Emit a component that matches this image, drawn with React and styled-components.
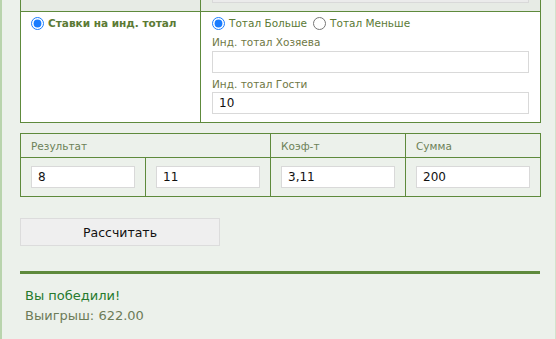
import React from "react";
import styled, { createGlobalStyle } from "styled-components";

const GlobalStyle = createGlobalStyle`
  html, body { margin: 0; padding: 0; }
  body {
    background: #ecf1eb;
    font-family: "DejaVu Sans", Verdana, sans-serif;
    overflow: hidden;
  }
`;

const Page = styled.div`
  border-left: 2px solid #b9d4ad;
  border-right: 1px solid #d3e2cc;
  padding: 0 15px 30px 18px;
  min-height: 400px;
  box-sizing: border-box;
`;

const Scrolled = styled.div`
  margin-top: -25px;
`;

const Table = styled.table`
  width: 520px;
  border-collapse: collapse;
  table-layout: fixed;
  border: 1px solid #5e8a3c;
`;

const Row = styled.tr`
  background: ${(p) => p.$bg || "transparent"};
`;

const Cell = styled.td`
  border: 1px solid #5e8a3c;
  padding: ${(p) => p.$pad || "3px 10px 8px"};
  vertical-align: top;
  box-sizing: border-box;
`;

const HeadCell = styled.th`
  border: 1px solid #5e8a3c;
  padding: 4px 10px 4px;
  text-align: left;
  font-weight: normal;
  font-size: 10.5px;
  color: #6c8158;
  height: 24px;
  box-sizing: border-box;
`;

const RadioLine = styled.label`
  display: flex;
  align-items: center;
  font-size: 10.5px;
  font-weight: ${(p) => (p.$bold ? "bold" : "normal")};
  color: #5b7a35;
  line-height: 16px;
  height: 16px;
  white-space: nowrap;
  margin-left: ${(p) => p.$gap || "0"};
`;

const RadioGroup = styled.div`
  display: flex;
  align-items: center;
`;

const Radio = styled.input.attrs({ type: "radio" })`
  width: 13px;
  height: 13px;
  margin: 0 4px 0 0;
  accent-color: #1a7cff;
`;

const FieldLabel = styled.div`
  font-size: 10.5px;
  color: #6f7845;
  margin: ${(p) => p.$top || "4px"} 0 ${(p) => p.$bottom || "2px"};
  line-height: 14px;
`;

const TextInput = styled.input`
  display: block;
  width: 100%;
  height: 22px;
  box-sizing: border-box;
  border: 1px solid #d9d9d9;
  background: ${(p) => (p.disabled ? "#ebebeb" : "#fff")};
  padding: 0 6px;
  font-family: "DejaVu Sans", Verdana, sans-serif;
  font-size: 12px;
  color: #111;
  outline: none;
`;

const ResultTable = styled(Table)`
  margin-top: 10px;
`;

const Button = styled.button`
  display: block;
  margin-top: 21px;
  width: 200px;
  height: 28px;
  background: #efefef;
  border: 1px solid #dcdcdc;
  font-family: "DejaVu Sans", Verdana, sans-serif;
  font-size: 12.5px;
  color: #111;
  padding: 0;
`;

const Divider = styled.div`
  margin-top: 25px;
  width: 520px;
  height: 3px;
  background: #5e8a3c;
`;

const Message = styled.div`
  font-size: 13px;
  line-height: 20px;
  color: ${(p) => p.$color};
  padding-left: 5px;
`;

const Messages = styled.div`
  margin-top: 12px;
`;

export default function App() {
  return (
    <>
      <GlobalStyle />
      <Page>
        <Scrolled>
          <Table>
            <colgroup>
              <col style={{ width: "180px" }} />
              <col style={{ width: "340px" }} />
            </colgroup>
            <tbody>
              <Row $bg="#e7ebe5">
                <Cell $pad="5px 10px 8px" />
                <Cell $pad="5px 11px 8px">
                  <TextInput disabled aria-label="Тотал" />
                </Cell>
              </Row>
              <Row $bg="#ffffff">
                <Cell $pad="3px 10px 8px">
                  <RadioLine $bold>
                    <Radio name="mode" defaultChecked /> Ставки на инд. тотал
                  </RadioLine>
                </Cell>
                <Cell $pad="3px 11px 8px">
                  <RadioGroup>
                    <RadioLine>
                      <Radio name="tt" defaultChecked /> Тотал Больше
                    </RadioLine>
                    <RadioLine $gap="6px">
                      <Radio name="tt" /> Тотал Меньше
                    </RadioLine>
                  </RadioGroup>
                  <FieldLabel>Инд. тотал Хозяева</FieldLabel>
                  <TextInput defaultValue="" />
                  <FieldLabel $bottom="1px">Инд. тотал Гости</FieldLabel>
                  <TextInput defaultValue="10" />
                </Cell>
              </Row>
            </tbody>
          </Table>

          <ResultTable>
            <colgroup>
              <col style={{ width: "125px" }} />
              <col style={{ width: "125px" }} />
              <col style={{ width: "135px" }} />
              <col style={{ width: "135px" }} />
            </colgroup>
            <thead>
              <tr>
                <HeadCell colSpan={2}>Результат</HeadCell>
                <HeadCell>Коэф-т</HeadCell>
                <HeadCell>Сумма</HeadCell>
              </tr>
            </thead>
            <tbody>
              <tr>
                <Cell $pad="8px 10px 8px">
                  <TextInput defaultValue="8" />
                </Cell>
                <Cell $pad="8px 10px 8px">
                  <TextInput defaultValue="11" />
                </Cell>
                <Cell $pad="8px 10px 8px">
                  <TextInput defaultValue="3,11" />
                </Cell>
                <Cell $pad="8px 10px 8px">
                  <TextInput defaultValue="200" />
                </Cell>
              </tr>
            </tbody>
          </ResultTable>

          <Button type="button">Рассчитать</Button>
          <Divider />
          <Messages>
            <Message $color="#267a2e">Вы победили!</Message>
            <Message $color="#6d7c58">Выигрыш: 622.00</Message>
          </Messages>
        </Scrolled>
      </Page>
    </>
  );
}
